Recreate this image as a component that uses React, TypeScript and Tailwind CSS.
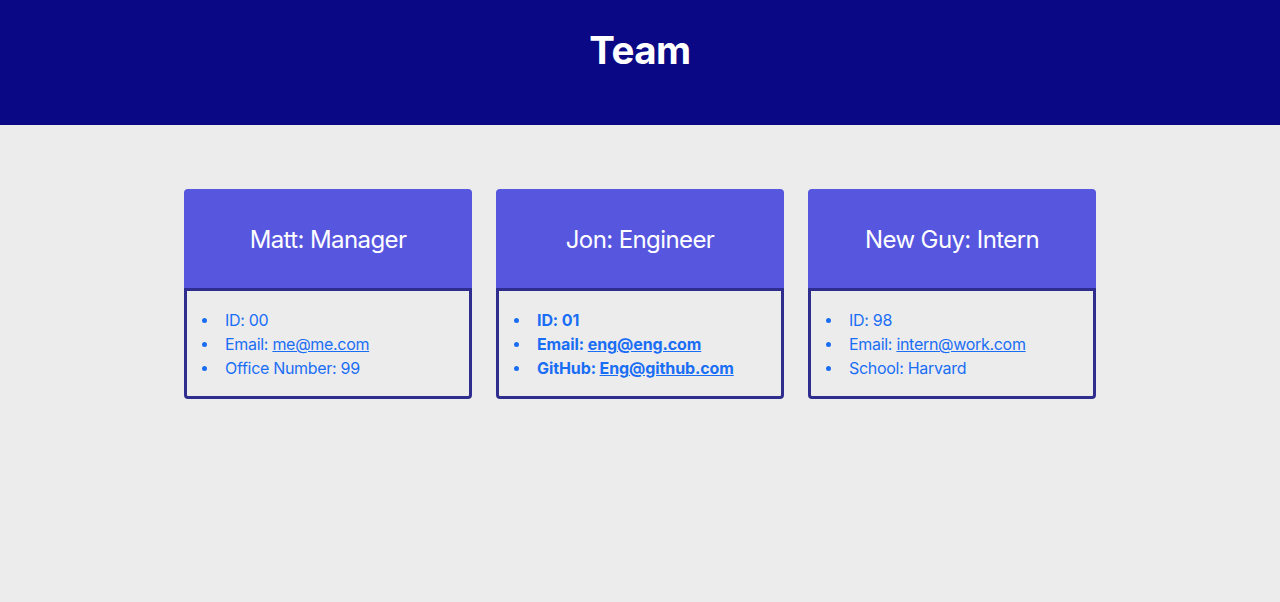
import React from "react";

type Item = { label: string; value: string; link?: boolean };
type Card = { title: string; bold?: boolean; items: Item[] };

const cards: Card[] = [
  {
    title: "Matt: Manager",
    items: [
      { label: "ID:", value: "00" },
      { label: "Email:", value: "me@me.com", link: true },
      { label: "Office Number:", value: "99" },
    ],
  },
  {
    title: "Jon: Engineer",
    bold: true,
    items: [
      { label: "ID:", value: "01" },
      { label: "Email:", value: "eng@eng.com", link: true },
      { label: "GitHub:", value: "Eng@github.com", link: true },
    ],
  },
  {
    title: "New Guy: Intern",
    items: [
      { label: "ID:", value: "98" },
      { label: "Email:", value: "intern@work.com", link: true },
      { label: "School:", value: "Harvard" },
    ],
  },
];

export default function App() {
  return (
    <div
      className="min-h-[602px] bg-[#ececec]"
      style={{ fontFamily: "Inter, 'Noto Sans', sans-serif" }}
    >
      <header className="h-[125px] bg-[#0a0885] flex justify-center pt-[27px]">
        <h1 className="text-[38.5px] leading-[46px] font-bold text-white tracking-[-0.5px]">Team</h1>
      </header>
      <main className="flex justify-center gap-[24px] pt-[64px]">
        {cards.map((c) => (
          <div key={c.title} className="w-[288px] flex flex-col">
            <div className="h-[100px] bg-[#5656df] rounded-t-[4px] flex items-center justify-center pt-[2px]">
              <h2 className="text-[24px] text-white font-normal tracking-[-0.6px]">{c.title}</h2>
            </div>
            <div className="border-[3px] border-[#2f2e8e] rounded-b-[4px] -mt-[1px]">
              <ul
                className={`pl-[15px] pt-[17px] pb-[16px] text-[16px] leading-[24px] text-[#1a6ef5] ${
                  c.bold ? "font-bold tracking-[-0.1px]" : "tracking-[-0.3px]"
                }`}
              >
                {c.items.map((it) => (
                  <li key={it.label} className="flex items-center">
                    <span className="w-[23px] shrink-0 flex">
                      <span className="w-[5px] h-[5px] rounded-full bg-[#1a6ef5]" />
                    </span>
                    <span>
                      {it.label}{" "}
                      {it.link ? (
                        <a href="#" className="underline">
                          {it.value}
                        </a>
                      ) : (
                        it.value
                      )}
                    </span>
                  </li>
                ))}
              </ul>
            </div>
          </div>
        ))}
      </main>
    </div>
  );
}
